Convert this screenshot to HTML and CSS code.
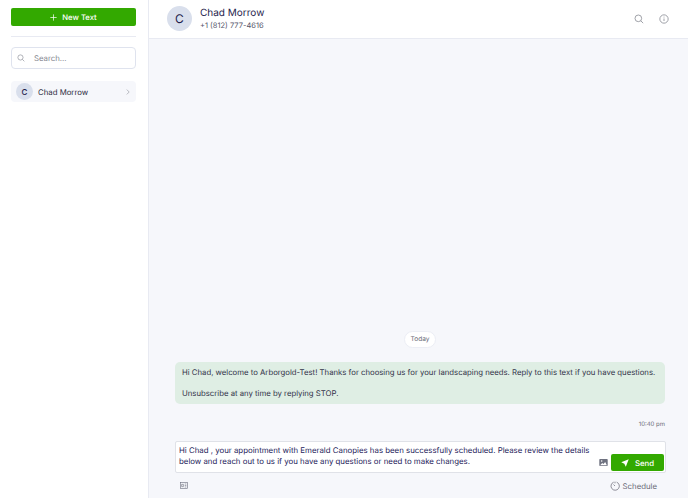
FILE: index.html
```html
<!DOCTYPE html>
<html>
    <head>
        <meta name="viewport" content="width=device-width, initial-scale=1.0">
        <meta charset="utf-8">
        <title>Texts</title>
        <link rel="stylesheet" href="styles.css">
    </head>
    <body>
        <div class="app">
            <aside class="sidebar">
                <button class="new-text">
                    <svg class="plus" viewBox="0 0 10 10"><path d="M5 .5v9M.5 5h9"/></svg>
                    New Text
                </button>
                <div class="divider"></div>
                <div class="search">
                    <svg class="ico" viewBox="0 0 12 12"><circle cx="5.2" cy="5.2" r="3.9"/><path d="M8.1 8.1l2.9 2.9"/></svg>
                    <span>Search...</span>
                </div>
                <div class="contact">
                    <div class="avatar small">C</div>
                    <div class="contact-name">Chad Morrow</div>
                    <svg class="chev" viewBox="0 0 6 10"><path d="M1 1l4 4-4 4"/></svg>
                </div>
            </aside>
            <main class="chat">
                <header class="chat-head">
                    <div class="avatar big">C</div>
                    <div class="who">
                        <div class="who-name">Chad Morrow</div>
                        <div class="who-phone">+1 (812) 777-4616</div>
                    </div>
                    <div class="head-icons">
                        <svg class="ico head-ico" viewBox="0 0 12 12"><circle cx="5.2" cy="5.2" r="4"/><path d="M8.1 8.1l2.9 2.9"/></svg>
                        <svg class="ico head-ico" viewBox="0 0 12 12"><circle cx="6" cy="6" r="5"/><path d="M6 5.4v3M6 3.2v1"/></svg>
                    </div>
                </header>
                <section class="thread">
                    <div class="today">Today</div>
                    <div class="bubble">
                        <p>Hi Chad, welcome to Arborgold-Test! Thanks for choosing us for your landscaping needs. Reply to this text if you have questions.</p>
                        <p>Unsubscribe at any time by replying STOP.</p>
                    </div>
                    <div class="stamp">10:40 pm</div>
                </section>
                <div class="composer">
                    <div class="draft">Hi Chad , your appointment with Emerald Canopies has been successfully scheduled. Please review the details below and reach out to us if you have any questions or need to make changes.</div>
                    <svg class="pic" viewBox="0 0 12 10"><rect width="12" height="10" rx="1" fill="#6f7280"/><circle cx="3.4" cy="3" r="1.1" fill="#fff"/><path d="M1.2 8.8l3-3.2 1.8 1.7 2.4-3 2.4 4.5z" fill="#fff"/></svg>
                    <button class="send">
                        <svg class="plane" viewBox="0 0 12 12"><path d="M11.6.4L.4 4.8l4.6 2.2 2.2 4.6z"/></svg>
                        Send
                    </button>
                </div>
                <div class="tools">
                    <svg class="tpl" viewBox="0 0 10 9"><rect x=".5" y=".5" width="9" height="8"/><path d="M2 3h2.2v3H2zM6 2.6h2M6 4.5h2M6 6.4h2"/></svg>
                    <div class="schedule">
                        <svg class="clock" viewBox="0 0 12 12"><path d="M4.4 1.4A5 5 0 1 0 8 1.4"/><path d="M6 .8v2M6 6l-1.8-1.8"/></svg>
                        Schedule
                    </div>
                </div>
            </main>
        </div>
    </body>
</html>
```

FILE: styles.css
```css
*{
    box-sizing: border-box;
}
html,body{
    height:100%;
}
body{
    margin:0;
    font-family:"Inter","Liberation Sans",sans-serif;
    color:#1f1d4d;
    overflow:hidden;
    text-rendering:geometricPrecision;
}
svg{
    display:block;
    flex:none;
}
.app{
    display:flex;
    height:498px;
}
.sidebar{
    width:149px;
    flex:none;
    background:#fff;
    border-right:1px solid #e8eaf2;
    padding:8px 12px 0 11px;
}
.new-text{
    display:flex;
    align-items:center;
    justify-content:center;
    gap:5px;
    width:100%;
    height:18px;
    padding:0;
    background:#33a900;
    border:0;
    border-radius:2px;
    color:#fff;
    font:500 7.7px "Inter",sans-serif;
    text-rendering:geometricPrecision;
}
.plus{
    width:7px;
    height:7px;
    fill:none;
    stroke:#fff;
    stroke-width:1;
}
.divider{
    height:1px;
    margin:10px 0;
    background:#e8eaf2;
}
.search{
    display:flex;
    align-items:center;
    gap:9px;
    height:22px;
    margin-top:10px;
    padding-left:5px;
    border:1px solid #dfe3ee;
    border-radius:4px;
    color:#85878f;
    font-size:7.8px;
}
.ico{
    fill:none;
    stroke:#8d8f98;
    stroke-width:1;
}
.search .ico{
    width:8px;
    height:8px;
}
.contact{
    display:flex;
    align-items:center;
    height:21px;
    margin-top:12px;
    padding:0 5px;
    background:#f6f7fb;
    border-radius:4px;
}
.avatar{
    display:flex;
    align-items:center;
    justify-content:center;
    flex:none;
    border-radius:50%;
    background:#d9dfec;
    color:#1f1d4d;
}
.avatar.small{
    width:17px;
    height:17px;
    font-size:8px;
    font-weight:500;
}
.avatar.big{
    width:25px;
    height:25px;
    font-size:12px;
}
.contact-name{
    flex:1;
    margin-left:5px;
    font-size:7.8px;
    color:#2b2a40;
}
.chev{
    width:4px;
    height:6px;
    margin-right:1px;
    fill:none;
    stroke:#8d8f98;
    stroke-width:1;
}
.chat{
    flex:1;
    display:flex;
    flex-direction:column;
    min-width:0;
    background:#f6f7fb;
}
.chat-head{
    display:flex;
    align-items:center;
    height:39px;
    flex:none;
    padding:0 19px 1px 18px;
    background:#fff;
    border-bottom:1px solid #e8eaf2;
}
.who{
    flex:1;
    margin-left:8px;
}
.who-name{
    font-size:10px;
    line-height:14px;
}
.who-phone{
    font-size:7.5px;
    line-height:11px;
    color:#55566a;
}
.head-icons{
    display:flex;
    gap:15px;
}
.head-ico{
    width:10px;
    height:10px;
}
.thread{
    flex:1;
    display:flex;
    flex-direction:column;
    justify-content:flex-end;
    align-items:center;
    padding:0 23px 0 26px;
}
.today{
    width:32px;
    height:17px;
    margin-bottom:14px;
    background:#fff;
    border:1px solid #eceef5;
    border-radius:9px;
    font-size:6.6px;
    line-height:15px;
    text-align:center;
    color:#6b6c78;
}
.bubble{
    width:100%;
    height:42px;
    padding:5px 7px;
    background:#dfeee4;
    border-radius:5px;
    font-size:7.75px;
    line-height:11px;
    color:#33344a;
}
.bubble p{
    margin:0 0 10px;
    white-space:nowrap;
}
.stamp{
    align-self:flex-end;
    margin:17px 0 12px;
    font-size:6px;
    line-height:8px;
    color:#6b6c78;
}
.composer{
    display:flex;
    align-items:flex-end;
    flex:none;
    height:32px;
    margin:0 22px 0 26px;
    padding:0 1px 1px 3px;
    background:#fff;
    border:1px solid #e0e2e8;
    border-radius:2px;
}
.draft{
    flex:1;
    align-self:flex-start;
    margin-top:3px;
    font-size:7.85px;
    line-height:11px;
    color:#25235a;
}
.pic{
    width:9px;
    height:7px;
    margin:0 3px 5px 0;
}
.send{
    display:flex;
    align-items:center;
    justify-content:center;
    gap:6px;
    width:53px;
    height:17px;
    padding:0;
    background:#33a900;
    border:0;
    border-radius:2px;
    color:#fff;
    font:500 7.8px "Inter",sans-serif;
    text-rendering:geometricPrecision;
}
.plane{
    width:8px;
    height:8px;
    fill:#fff;
}
.tools{
    display:flex;
    align-items:center;
    justify-content:space-between;
    flex:none;
    height:25px;
    padding:0 31px;
}
.tpl{
    width:8px;
    height:7px;
    fill:none;
    stroke:#6f7280;
    stroke-width:.8;
}
.schedule{
    display:flex;
    align-items:center;
    gap:3px;
    font-size:7.8px;
    color:#6b6c78;
}
.clock{
    width:10px;
    height:10px;
    fill:none;
    stroke:#6b6c78;
    stroke-width:.9;
}
```
